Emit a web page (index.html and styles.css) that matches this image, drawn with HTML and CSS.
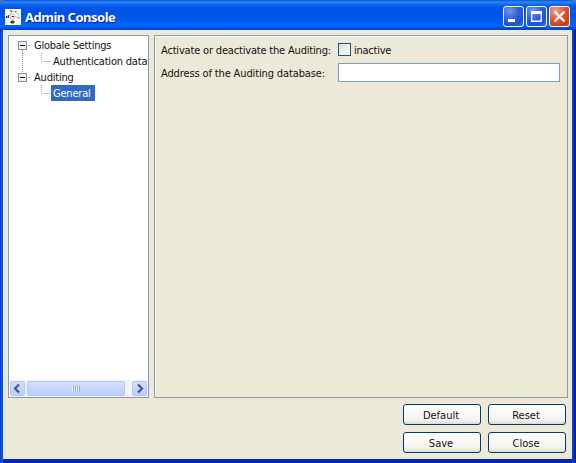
FILE: index.html
```html
<!DOCTYPE html>
<html lang="en">
<head>
<meta charset="utf-8">
<title>Admin Console</title>
<link rel="stylesheet" href="styles.css">
</head>
<body>
<div class="window">
  <header class="titlebar">
    <svg class="app-icon" width="16" height="16" viewBox="0 0 16 16">
      <rect width="16" height="16" fill="#fff"/>
      <g stroke="#aaa" stroke-width=".7" fill="none"><path d="M2 7l4-2 1-3 4 1 3 4M9 8h4M8 10v3"/><circle cx="7.500" cy="7.500" r="2.500"/></g>
      <g fill="#333"><rect x="1" y="7" width="1.500" height="2"/><rect x="3" y="6" width="1" height="3"/><rect x="6.500" y="7" width="2.500" height="1"/><ellipse cx="7.500" cy="13" rx="2.200" ry="1.500"/><rect x="5" y="1.500" width="2" height="1"/></g>
      <rect x="13" y="8" width="1.500" height="1.500" fill="#c66"/><rect x="10" y="2" width="1.500" height="1" fill="#a55"/>
    </svg>
    <h1 class="title">Admin Console</h1>
    <div class="controls">
      <span class="control"><svg width="19" height="19" viewBox="0 0 19 19"><rect x="4" y="12" width="7" height="3" fill="#fff"/></svg></span>
      <span class="control"><svg width="19" height="19" viewBox="0 0 19 19"><path d="M4 4h11v11H4zM5.400 7v6.600h8.200V7z" fill="#fff" fill-rule="evenodd"/></svg></span>
      <span class="control control-close"><svg width="19" height="19" viewBox="0 0 19 19"><path d="M4.500 4.500l10 10M14.500 4.500l-10 10" stroke="#fff" stroke-width="2.200"/></svg></span>
    </div>
  </header>
  <main class="content">
    <div class="panels">
      <nav class="tree-panel">
        <ul class="tree">
          <li class="node"><svg class="branch" width="24" height="16"><path d="M18.500 8.500h4M13.500 13v3" class="dots"/><rect x="9.500" y="4.500" width="8" height="8" class="box"/><path d="M11 8.500h5" class="minus"/></svg><span class="label globale">Globale Settings</span></li>
          <li class="node"><svg class="branch" width="42" height="16"><path d="M13.500 0v16M32.500 0v8M32.500 8.500h9" class="dots"/></svg><span class="label auth">Authentication data</span></li>
          <li class="node"><svg class="branch" width="24" height="16"><path d="M18.500 8.500h4M13.500 0v4" class="dots"/><rect x="9.500" y="4.500" width="8" height="8" class="box"/><path d="M11 8.500h5" class="minus"/></svg><span class="label auditing">Auditing</span></li>
          <li class="node"><svg class="branch" width="42" height="16"><path d="M32.500 0v8M32.500 8.500h9" class="dots"/></svg><span class="label selected">General</span></li>
        </ul>
        <div class="scrollbar">
          <span class="arrow"><svg width="15" height="15"><path d="M9 3.500L5 7.500l4 4" class="chevron"/></svg></span>
          <span class="thumb"><i class="grip"></i></span>
          <span class="arrow arrow-right"><svg width="15" height="15"><path d="M6 3.500l4 4-4 4" class="chevron"/></svg></span>
        </div>
      </nav>
      <section class="form-panel">
        <div class="row"><span class="caption activate">Activate or deactivate the Auditing:</span><span class="checkbox"></span><span class="inactive">inactive</span></div>
        <div class="row"><span class="caption address">Address of the Auditing database:</span><span class="field"></span></div>
      </section>
    </div>
    <footer class="actions">
      <button class="button">Default</button><button class="button">Reset</button>
      <button class="button">Save</button><button class="button">Close</button>
    </footer>
  </main>
</div>
</body>
</html>
```
FILE: styles.css
```css
* { box-sizing: border-box; }
html { background: #3f78c0; }
body { margin: 0; font: 11px/16px "DejaVu Sans Condensed", "DejaVu Sans", sans-serif; font-stretch: condensed; color: #111; }
.window {
  width: 576px; height: 463px; display: flex; flex-direction: column;
  background: linear-gradient(90deg, #0831d9 0, #0855e5 2px, #0855e5 3px, #0050e0 572px, #0030c8 574px, #00138c 576px);
  border-radius: 7px 7px 0 0; overflow: hidden;
}
.titlebar {
  height: 30px; flex: none; display: flex; align-items: center; padding: 3px 6px 0 5px;
  background: linear-gradient(#0752c9 0, #2e86ff 2px, #0a63ee 5px, #0054e3 9px, #0055e8 16px, #0062fc 23px, #0064ff 26px, #0050d8 28px, #0042c4 30px);
}
.app-icon { flex: none; }
.title { margin: 0 0 0 4px; font: bold 13px/18px "Noto Sans", sans-serif; color: #fff; text-shadow: 1px 1px 1px #0a1f86; letter-spacing: -.5px; }
.controls { display: flex; gap: 2px; margin-left: auto; }
.control { width: 21px; height: 21px; border: 1px solid #fff; border-radius: 3px; background: radial-gradient(circle at 30% 20%, #7196ee, #2c5fdd 45%, #1e50d2 75%, #3476f2); }
.control svg { display: block; }
.control-close { background: radial-gradient(circle at 30% 20%, #f0a58d, #df5735 45%, #cb3c14 80%, #d95830); }
.content { flex: 1; margin: 0 4px 4px 3px; padding: 5px 4px 0 5px; background: #ece9d8; box-shadow: 0 4px 0 #0026b4; }
.panels { display: flex; gap: 5px; height: 363px; }
.tree-panel { width: 141px; border: 1px solid #7f9db9; background: #fff; display: flex; flex-direction: column; overflow: hidden; }
.tree { list-style: none; margin: 0; padding: 1px 0 0; flex: 1; }
.node { display: flex; height: 16px; white-space: nowrap; }
.branch { flex: none; }
.dots { stroke: #999; stroke-dasharray: 1 1; fill: none; }
.box { fill: #f4f3ee; stroke: #7f8fa5; }
.minus { stroke: #111; }
.label { padding-left: 1px; line-height: 18px; letter-spacing: -.2px; }
.globale { letter-spacing: -.27px; }
.auth { padding-left: 2px; letter-spacing: -.2px; }
.selected { height: 16px; padding: 0 4px 0 2px; background: #316ac5; color: #fff; width: 44px; }
.scrollbar { display: flex; height: 17px; padding: 1px; background: #f5f5f0; }
.arrow, .thumb { height: 15px; border: 1px solid #b4c8f6; border-radius: 2px; background: linear-gradient(#d2defe, #bccdfb); }
.arrow { width: 15px; flex: none; }
.arrow svg { display: block; margin: -1px; }
.arrow-right { margin-left: auto; }
.chevron { fill: none; stroke: #43598a; stroke-width: 2.2; }
.thumb { width: 98px; margin-left: 2px; display: flex; align-items: center; justify-content: center; }
.grip { width: 8px; height: 6px; background: repeating-linear-gradient(90deg, #eef4fe 0 1px, #8caae8 1px 2px); }
.form-panel { flex: 1; border: 1px solid #8c9fa9; padding: 4px 7px 0 6px; box-shadow: inset 1px 1px 0 #f8f7f0; }
.row { display: flex; align-items: center; height: 19px; margin-bottom: 4px; white-space: nowrap; }
.caption { width: 177px; flex: none; line-height: 17px; padding-top: 2px; }
.activate { letter-spacing: -.18px; }
.address { letter-spacing: -.13px; }
.checkbox { width: 13px; height: 13px; border: 1px solid #1d5180; background: linear-gradient(135deg, #dcdcd7, #fff); }
.inactive { margin-left: 3px; line-height: 17px; padding-top: 2px; letter-spacing: -.25px; }
.field { width: 222px; height: 19px; border: 1px solid #7f9db9; background: #fff; }
.actions { display: grid; grid-template-columns: 78px 78px; grid-auto-rows: 21px; gap: 7px; justify-content: end; margin: 6px 2px 0 0; }
.button { font: inherit; line-height: 17px; padding: 1px 2px 0 0; color: #111; border: 1px solid #003c74; border-radius: 3px; background: linear-gradient(#fff, #f4f3ee 80%, #dcd8cc); }
```
